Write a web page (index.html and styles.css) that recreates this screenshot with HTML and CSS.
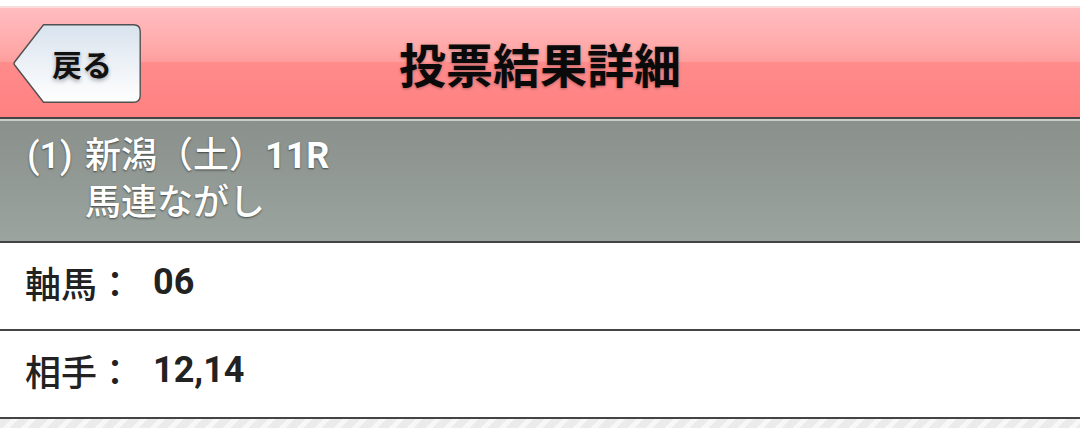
FILE: index.html
```html
<!DOCTYPE html>
<html lang="ja">
<head>
<meta charset="utf-8">
<title>投票結果詳細</title>
<link rel="stylesheet" href="styles.css">
</head>
<body>
<div class="page">
  <header class="header">
    <div class="header-left">
      <button class="back">
        <svg class="back-shape" viewBox="0 0 128 79" width="128" height="79" aria-hidden="true">
          <defs>
            <linearGradient id="bg" x1="0" y1="0" x2="0" y2="1">
              <stop offset="0" stop-color="#d8e3ee"/>
              <stop offset="1" stop-color="#ffffff"/>
            </linearGradient>
          </defs>
          <path d="M30.5 0.8 H120.5 Q127.2 0.8 127.2 7.5 V71.5 Q127.2 78.2 120.5 78.2 H30.5 L1.6 41 Q0.6 39.5 1.6 38 Z" fill="url(#bg)" stroke="#505050" stroke-width="1.4"/>
        </svg>
        <span class="back-label">戻る</span>
      </button>
    </div>
    <h1 class="title">投票結果詳細</h1>
    <div class="header-right"></div>
  </header>

  <section class="race">
    <div class="race-no">(1)</div>
    <div class="race-info">
      <div class="race-line">新潟（土）<b class="race-r">11R</b></div>
      <div class="race-line">馬連ながし</div>
    </div>
  </section>

  <div class="row">
    <span class="row-label">軸馬：</span><span class="row-value">06</span>
  </div>
  <div class="row">
    <span class="row-label">相手：</span><span class="row-value">12,14</span>
  </div>
  <div class="footer-stripes"></div>
</div>
</body>
</html>
```

FILE: styles.css
```css
html, body {
  margin: 0;
  padding: 0;
  background: #ffffff;
}

.page {
  width: 1080px;
  height: 428px;
  overflow: hidden;
  padding-top: 6px;
  box-sizing: border-box;
  font-family: Roboto, "Noto Sans CJK JP", sans-serif;
}

.header {
  height: 109px;
  border-top: 2px solid #fadcdc;
  border-bottom: 2px solid #444444;
  background: linear-gradient(to bottom,
    #ffbdc0 0%,
    #ffaaaa 35%,
    #ff9e9e 49%,
    #ff8b8b 50%,
    #ff8181 100%);
  display: grid;
  grid-template-columns: 1fr auto 1fr;
  align-items: center;
}

.header-left {
  display: flex;
  align-items: center;
  padding-left: 13px;
}

.back {
  position: relative;
  width: 128px;
  height: 79px;
  margin-top: 1px;
  padding: 0 0 0 39px;
  border: 0;
  background: transparent;
  display: flex;
  align-items: center;
  cursor: pointer;
}

.back-shape {
  position: absolute;
  left: 0;
  top: 0;
}

.back-label {
  position: relative;
  font-family: "Noto Sans CJK JP", sans-serif;
  font-size: 30px;
  font-weight: 700;
  color: #111111;
  line-height: 1;
  text-shadow: 0 2px 4px rgba(0, 0, 0, 0.35);
}

.title {
  margin: 0;
  font-family: "Noto Sans CJK JP", sans-serif;
  font-size: 47px;
  font-weight: 700;
  color: #0a0a0a;
  line-height: 1;
  text-shadow: 0 1px 3px rgba(0, 0, 0, 0.3);
}

.race {
  border-top: 2px solid #c9cecb;
  border-bottom: 2px solid #444444;
  background: linear-gradient(to bottom, #8a908c 0%, #9ba49f 100%);
  display: flex;
  padding: 12px 0 0 27px;
  height: 108px;
  color: #ffffff;
  text-shadow: 0 1px 2px rgba(0, 0, 0, 0.55);
  font-size: 36px;
  font-weight: 500;
}

.race-no {
  width: 58px;
  line-height: 47px;
}

.race-line {
  line-height: 47px;
}

.race-r {
  font-weight: 700;
}

.row {
  height: 78px;
  padding: 0 0 8px 25px;
  border-bottom: 2px solid #444444;
  display: flex;
  align-items: center;
  color: #222222;
  font-size: 36px;
  font-weight: 500;
}

.row-label {
  font-family: "Noto Sans CJK JP", sans-serif;
}

.row-value {
  margin-left: 20px;
  font-weight: 700;
}

.footer-stripes {
  height: 10px;
  background:
    repeating-linear-gradient(135deg, #ebebeb 0, #ebebeb 8px, #f7f7f7 8px, #f7f7f7 13px);
}
```
